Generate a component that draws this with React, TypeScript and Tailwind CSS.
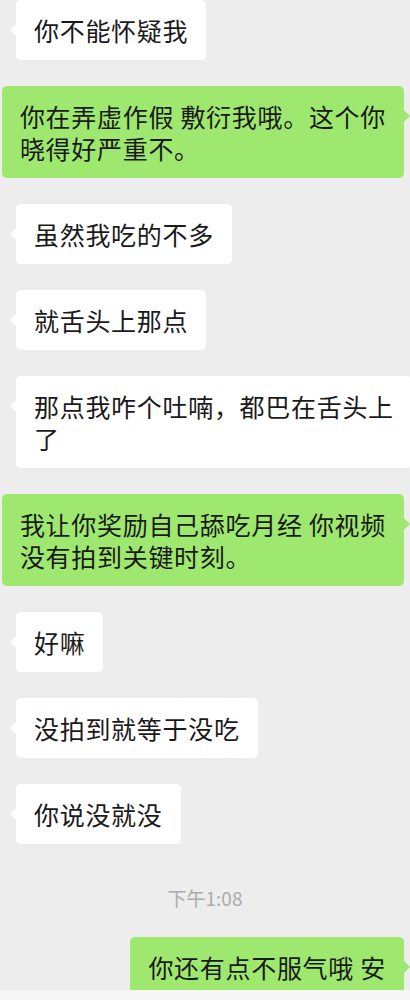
const font = { fontFamily: '"Noto Sans CJK SC", "Noto Sans", sans-serif' };

type Msg = { side: "in" | "out" | "time"; lines: string[] };

const messages: Msg[] = [
  { side: "in", lines: ["你不能怀疑我"] },
  { side: "out", lines: ["你在弄虚作假 敷衍我哦。这个你", "晓得好严重不。"] },
  { side: "in", lines: ["虽然我吃的不多"] },
  { side: "in", lines: ["就舌头上那点"] },
  { side: "in", lines: ["那点我咋个吐喃，都巴在舌头上", "了"] },
  { side: "out", lines: ["我让你奖励自己舔吃月经 你视频", "没有拍到关键时刻。"] },
  { side: "in", lines: ["好嘛"] },
  { side: "in", lines: ["没拍到就等于没吃"] },
  { side: "in", lines: ["你说没就没"] },
  { side: "time", lines: ["下午1:08"] },
  { side: "out", lines: ["你还有点不服气哦 安"] },
];

function Bubble({ msg }: { msg: Msg }) {
  if (msg.side === "time") {
    return (
      <div className="pt-[15px] text-center text-[19px] leading-[26px] text-[#ababab]">
        {msg.lines[0]}
      </div>
    );
  }
  const out = msg.side === "out";
  return (
    <div className={out ? "flex justify-end pr-[6px]" : "flex justify-start pl-4"}>
      <div
        className={
          "relative shrink-0 whitespace-nowrap rounded-[5px] px-[18px] py-[14px] text-[25px] leading-[32px] tracking-[0.7px] text-[#1a1a1a] " +
          (out ? "bg-[#9fe86f]" : "bg-white")
        }
      >
        {out ? (
          <span className="absolute right-[-6px] top-[24px] h-0 w-0 border-y-[6px] border-l-[6px] border-y-transparent border-l-[#9fe86f]" />
        ) : (
          <span className="absolute left-[-6px] top-[24px] h-0 w-0 border-y-[6px] border-r-[6px] border-y-transparent border-r-white" />
        )}
        {msg.lines.map((l, i) => (
          <div key={i}>{l}</div>
        ))}
      </div>
    </div>
  );
}

export default function App() {
  return (
    <div className="w-[410px] h-[1000px] overflow-hidden bg-[#ededed] flex flex-col" style={font}>
      <div className="h-[990px] overflow-hidden flex flex-col gap-[26px]">
        {messages.map((m, i) => (
          <Bubble key={i} msg={m} />
        ))}
      </div>
      <div className="h-[10px] bg-[#f7f7f7]" />
    </div>
  );
}
